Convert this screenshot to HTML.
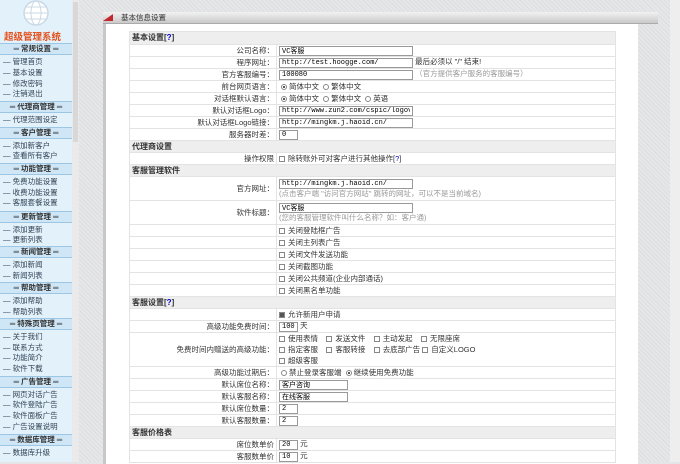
<!DOCTYPE html>
<html><head><meta charset="utf-8"><style>
*{margin:0;padding:0;box-sizing:border-box}
body{width:680px;height:462px;overflow:hidden;position:relative;background:#e4e5e6;font-family:"Liberation Sans","Noto Sans CJK SC",sans-serif;font-size:8px;color:#333}
#side{position:absolute;left:0;top:0;width:72px;height:462px;background:#e3f1fb}
#sb{position:absolute;left:72px;top:0;width:7px;height:462px;background:#eaeaea}
#sb div{position:absolute;left:1px;top:2px;width:5px;height:140px;background:#d8d8d8}
.h{position:absolute;left:0;width:72px;height:12px;background:#cfe6f6;border-top:1px solid #9cc6e4;border-bottom:1px solid #9cc6e4;text-align:center;font-weight:bold;font-size:7.5px;line-height:10px;color:#333}
.i{position:absolute;left:3px;font-size:7.5px;color:#345;line-height:10px}
#tex{position:absolute;left:79px;top:0;width:601px;height:462px;background:repeating-linear-gradient(45deg,#e6e7e8 0 2px,#dcdddf 2px 3px)}
#rs{position:absolute;left:670px;top:0;width:10px;height:462px;background:#eee}
#panel{position:absolute;left:103px;top:12px;width:535px;height:452px;background:#fff;border-left:3px solid #c8c8c8}
#bar{position:absolute;left:103px;top:12px;width:555px;height:12px;background:linear-gradient(#f2f2f2,#c9c9c9);border-bottom:1px solid #aaa;font-size:7.5px;line-height:12px;padding-left:18px;color:#333}
#bar:before{content:"";position:absolute;left:0;top:2px;border-left:10px solid transparent;border-bottom:7px solid #c1272d}
table{position:absolute;left:129px;top:31px;width:487px;border-collapse:collapse;background:#fff}
td{border:1px solid #e3e3e3;height:12px;font-size:7.5px;line-height:10px;padding:0 2px;vertical-align:middle}
td.l{width:147px;text-align:right}
tr.s td{background:#eee;font-weight:bold;font-size:8px}
input.t{border:1px solid #999;height:10px;font-size:7px;font-family:"Liberation Mono",monospace;padding:0 2px;vertical-align:middle}
.g{color:#999}
.c{display:inline-block;width:6px;height:6px;border:1px solid #888;margin-right:3px;vertical-align:middle}
.r{display:inline-block;width:6px;height:6px;border:1px solid #888;border-radius:50%;margin:0 2px;vertical-align:middle}
.r.on{background:radial-gradient(#333 30%,#fff 40%)}
a{color:#00c}
</style></head><body>
<div id="side">
<svg width="30" height="28" style="position:absolute;left:21px;top:0" viewBox="0 0 30 28"><circle cx="15" cy="13" r="12" fill="#fff" stroke="#c9d9e6" stroke-width="1.5"/><ellipse cx="15" cy="13" rx="5" ry="12" fill="none" stroke="#c9d9e6"/><line x1="3" y1="13" x2="27" y2="13" stroke="#c9d9e6"/><line x1="5" y1="7" x2="25" y2="7" stroke="#c9d9e6"/><line x1="5" y1="19" x2="25" y2="19" stroke="#c9d9e6"/></svg>
<div style="position:absolute;left:4px;top:29px;font-size:9.5px;font-weight:bold;color:#e4501c">超级管理系统</div>
<div class="h" style="top:43px">═ 常规设置 ═</div>
<div class="i" style="top:57px">— 管理首页</div><div class="i" style="top:68px">— 基本设置</div><div class="i" style="top:79px">— 修改密码</div><div class="i" style="top:89px">— 注销退出</div>
<div class="h" style="top:101px">═ 代理商管理 ═</div>
<div class="i" style="top:115px">— 代理范围设定</div>
<div class="h" style="top:127px">═ 客户管理 ═</div>
<div class="i" style="top:141px">— 添加新客户</div><div class="i" style="top:151px">— 查看所有客户</div>
<div class="h" style="top:163px">═ 功能管理 ═</div>
<div class="i" style="top:177px">— 免费功能设置</div><div class="i" style="top:188px">— 收费功能设置</div><div class="i" style="top:198px">— 客服套餐设置</div>
<div class="h" style="top:211px">═ 更新管理 ═</div>
<div class="i" style="top:225px">— 添加更新</div><div class="i" style="top:235px">— 更新列表</div>
<div class="h" style="top:246px">═ 新闻管理 ═</div>
<div class="i" style="top:260px">— 添加新闻</div><div class="i" style="top:271px">— 新闻列表</div>
<div class="h" style="top:282px">═ 帮助管理 ═</div>
<div class="i" style="top:296px">— 添加帮助</div><div class="i" style="top:307px">— 帮助列表</div>
<div class="h" style="top:318px">═ 特殊页管理 ═</div>
<div class="i" style="top:332px">— 关于我们</div><div class="i" style="top:343px">— 联系方式</div><div class="i" style="top:353px">— 功能简介</div><div class="i" style="top:364px">— 软件下载</div>
<div class="h" style="top:376px">═ 广告管理 ═</div>
<div class="i" style="top:390px">— 网页对话广告</div><div class="i" style="top:400px">— 软件登陆广告</div><div class="i" style="top:411px">— 软件面板广告</div><div class="i" style="top:422px">— 广告设置说明</div>
<div class="h" style="top:434px">═ 数据库管理 ═</div>
<div class="i" style="top:448px">— 数据库升级</div>
</div>
<div id="sb"><div></div></div>
<div id="tex"></div><div id="rs"></div>
<div id="panel"></div>
<div id="bar">基本信息设置</div>
<table>
<tr class="s"><td colspan="2" style="height:13px">基本设置[<a>?</a>]</td></tr>
<tr><td class="l">公司名称：</td><td><input class="t" style="width:134px" value="VC客服"></td></tr>
<tr><td class="l">程序网址：</td><td><input class="t" style="width:134px" value="http://test.hoogge.com/"> 最后必须以 "/" 结束!</td></tr>
<tr><td class="l">官方客服编号：</td><td><input class="t" style="width:134px" value="100080"> <span class="g">（官方提供客户服务的客服编号）</span></td></tr>
<tr><td class="l">前台网页语言：</td><td><span class="r on"></span>简体中文 <span class="r"></span>繁体中文</td></tr>
<tr><td class="l">对话框默认语言：</td><td><span class="r on"></span>简体中文 <span class="r"></span>繁体中文 <span class="r"></span>英语</td></tr>
<tr><td class="l">默认对话框Logo：</td><td><input class="t" style="width:134px" value="http://www.zun2.com/cspic/logovn.gif"></td></tr>
<tr><td class="l">默认对话框Logo链接：</td><td><input class="t" style="width:134px" value="http://mingkm.j.haoid.cn/"></td></tr>
<tr><td class="l">服务器时差：</td><td><input class="t" style="width:19px" value="0"></td></tr>
<tr class="s"><td colspan="2">代理商设置</td></tr>
<tr><td class="l">操作权限</td><td><span class="c"></span>除转账外可对客户进行其他操作[<a>?</a>]</td></tr>
<tr class="s"><td colspan="2">客服管理软件</td></tr>
<tr><td class="l" style="height:24px">官方网址：</td><td><input class="t" style="width:134px" value="http://mingkm.j.haoid.cn/"><br><span class="g">(点击客户端 "访问官方网站" 跳转的网址，可以不是当前域名)</span></td></tr>
<tr><td class="l" style="height:24px">软件标题：</td><td><input class="t" style="width:134px" value="VC客服"><br><span class="g">(您的客服管理软件叫什么名称？如：客户通)</span></td></tr>
<tr><td class="l"></td><td><span class="c"></span>关闭登陆框广告</td></tr>
<tr><td class="l"></td><td><span class="c"></span>关闭主列表广告</td></tr>
<tr><td class="l"></td><td><span class="c"></span>关闭文件发送功能</td></tr>
<tr><td class="l"></td><td><span class="c"></span>关闭截图功能</td></tr>
<tr><td class="l"></td><td><span class="c"></span>关闭公共频道(企业内部通话)</td></tr>
<tr><td class="l"></td><td><span class="c"></span>关闭黑名单功能</td></tr>
<tr class="s"><td colspan="2">客服设置[<a>?</a>]</td></tr>
<tr><td class="l"></td><td><span class="c" style="background:#555"></span>允许新用户申请</td></tr>
<tr><td class="l">高级功能免费时间：</td><td><input class="t" style="width:19px" value="100"> 天</td></tr>
<tr><td class="l" style="height:33px">免费时间内赠送的高级功能：</td><td style="line-height:11px"><span class="c"></span>使用表情 &nbsp; &nbsp;<span class="c"></span>发送文件 &nbsp; &nbsp;<span class="c"></span>主动发起 &nbsp; &nbsp;<span class="c"></span>无限座席<br><span class="c"></span>指定客服 &nbsp; &nbsp;<span class="c"></span>客服转接 &nbsp; &nbsp;<span class="c"></span>去底部广告 <span class="c"></span>自定义LOGO<br><span class="c"></span>超级客服</td></tr>
<tr><td class="l">高级功能过期后：</td><td><span class="r"></span>禁止登录客服端 <span class="r on"></span>继续使用免费功能</td></tr>
<tr><td class="l">默认席位名称：</td><td><input class="t" style="width:69px;font-family:inherit" value="客户咨询"></td></tr>
<tr><td class="l">默认客服名称：</td><td><input class="t" style="width:69px;font-family:inherit" value="在线客服"></td></tr>
<tr><td class="l">默认席位数量：</td><td><input class="t" style="width:19px" value="2"></td></tr>
<tr><td class="l">默认客服数量：</td><td><input class="t" style="width:19px" value="2"></td></tr>
<tr class="s"><td colspan="2">客服价格表</td></tr>
<tr><td class="l">席位数单价</td><td><input class="t" style="width:19px" value="20"> 元</td></tr>
<tr><td class="l">客服数单价</td><td><input class="t" style="width:19px" value="10"> 元</td></tr>
</table>
</body></html>
